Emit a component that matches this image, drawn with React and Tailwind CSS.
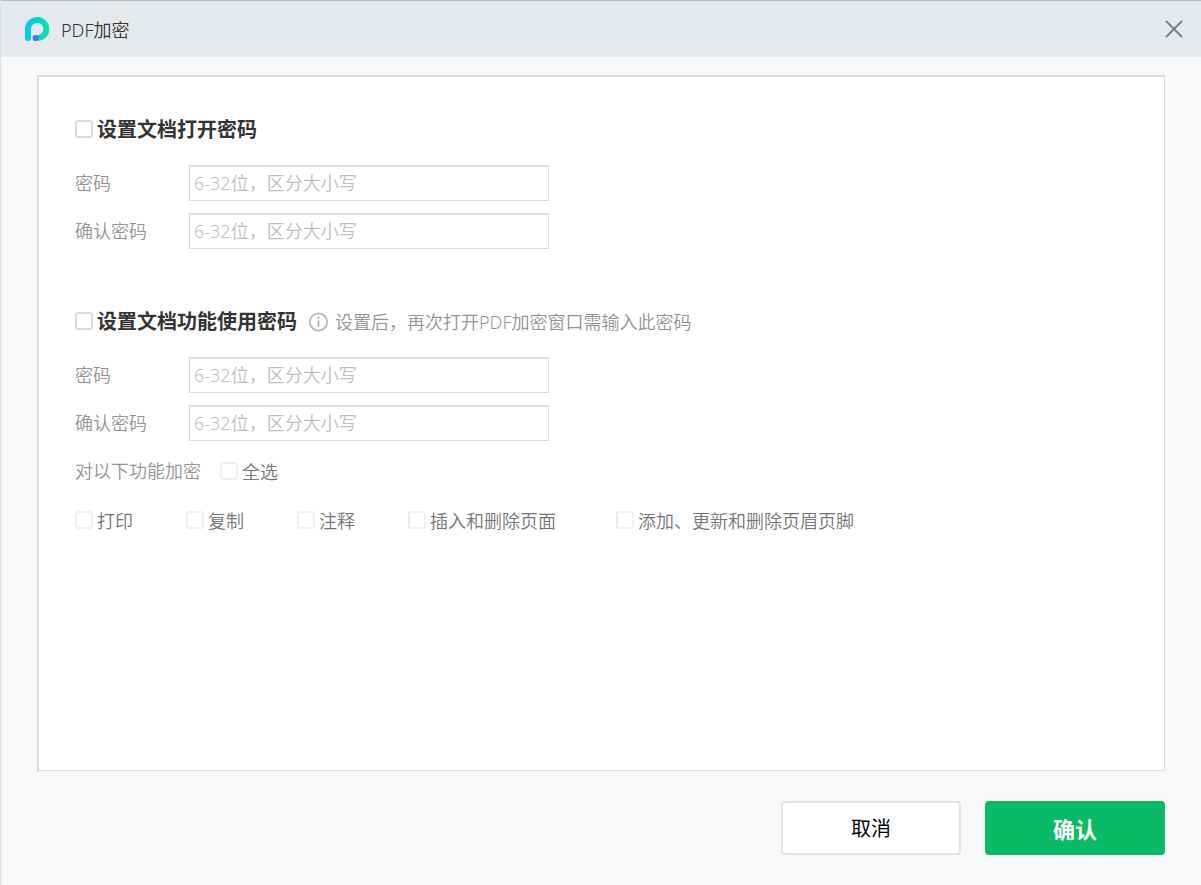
import React, { useState } from 'react';

const FEATURES = [
  { id: 'print', label: '打印' },
  { id: 'copy', label: '复制' },
  { id: 'annotate', label: '注释' },
  { id: 'pages', label: '插入和删除页面' },
  { id: 'headerFooter', label: '添加、更新和删除页眉页脚' },
];

const Logo = () => (
  <svg className="w-6 h-6" viewBox="0 0 24 24" fill="none" aria-hidden="true">
    <defs>
      <linearGradient id="logo-stroke" x1="0" y1="12" x2="24" y2="12" gradientUnits="userSpaceOnUse">
        <stop offset="0" stopColor="#06c8f5" />
        <stop offset="0.5" stopColor="#0ccfd2" />
        <stop offset="1" stopColor="#08e39c" />
      </linearGradient>
    </defs>
    <path
      d="M3 21V12A9 9 0 0 1 12 3A9 9 0 0 1 12.8 21"
      stroke="url(#logo-stroke)"
      strokeWidth="6"
      strokeLinejoin="round"
    />
    <circle cx="3" cy="21" r="3" fill="#06c8f5" />
    <circle cx="10.7" cy="21" r="3.1" fill="#3b74f7" />
  </svg>
);

const CloseIcon = () => (
  <svg className="w-5 h-5" viewBox="0 0 20 20" fill="none" stroke="#7b7d7f" strokeWidth="1.8" aria-hidden="true">
    <path d="M2 2L18 18M18 2L2 18" />
  </svg>
);

const InfoIcon = () => (
  <svg className="w-5 h-5 shrink-0" viewBox="0 0 20 20" fill="none" aria-hidden="true">
    <circle cx="9.5" cy="10" r="8.6" stroke="#b4b4b4" strokeWidth="1.8" />
    <circle cx="9.5" cy="5.8" r="1.1" fill="#a8a8a8" />
    <path d="M9.5 8.5V14.8" stroke="#a8a8a8" strokeWidth="1.6" />
  </svg>
);

const Checkbox = ({ id, checked, onChange, muted }) => (
  <input
    id={id}
    type="checkbox"
    checked={checked}
    onChange={onChange}
    className={`appearance-none shrink-0 w-[18px] h-[18px] rounded-[3px] bg-white checked:bg-[#0bba67] ${
      muted ? 'border-2 border-[#f0f0f0]' : 'border-2 border-[#dadada]'
    }`}
  />
);

const PasswordField = ({ id, label }) => (
  <div className="flex items-center">
    <label htmlFor={id} className="w-[114px] shrink-0 text-[#949494]">{label}</label>
    <input
      id={id}
      type="password"
      maxLength={32}
      placeholder="6-32位，区分大小写"
      className="w-[360px] h-9 px-1 pb-0.5 bg-white border border-t-2 border-[#dcdcdc] text-[#333] placeholder:text-[#bdbdbd] outline-none focus:border-[#0bba67]"
    />
  </div>
);

const App = () => {
  const [openEnabled, setOpenEnabled] = useState(false);
  const [usageEnabled, setUsageEnabled] = useState(false);
  const [selected, setSelected] = useState([]);

  const allSelected = selected.length === FEATURES.length;

  const toggleFeature = (id) => {
    setSelected(prev => (prev.includes(id) ? prev.filter(item => item !== id) : [...prev, id]));
  };

  return (
    <div className="min-h-screen flex flex-col bg-[#f7f8fa] border-l border-[#dfe0e2] font-['Noto_Sans','Noto_Sans_CJK_SC',sans-serif] text-lg leading-7 font-[350]">
      {/* Title bar */}
      <header className="h-[57px] shrink-0 flex items-center justify-between pl-6 pr-[17px] bg-[#e6e9ec] border-t border-[#bfc2c5]">
        <div className="flex items-center gap-3">
          <Logo />
          <h1 className="pt-0.5 text-[#333]">PDF加密</h1>
        </div>
        <button type="button" aria-label="关闭">
          <CloseIcon />
        </button>
      </header>

      <form className="flex-1 flex flex-col px-9 pt-[18px] pb-[30px]" onSubmit={e => e.preventDefault()}>
        <main className="flex-1 px-9 py-[38px] bg-white border border-t-2 border-l-2 border-[#dcdcdc]">
          {/* Open password */}
          <section>
            <div className="flex items-center gap-1 mb-[22px]">
              <Checkbox id="open" checked={openEnabled} onChange={() => setOpenEnabled(!openEnabled)} />
              <label htmlFor="open" className="pt-0.5 text-xl leading-[26px] font-bold text-[#333]">设置文档打开密码</label>
            </div>
            <div className="space-y-3">
              <PasswordField id="open-password" label="密码" />
              <PasswordField id="open-confirm" label="确认密码" />
            </div>
          </section>

          {/* Usage password */}
          <section className="mt-[58px]">
            <div className="flex items-center mb-[22px]">
              <div className="flex items-center gap-1">
                <Checkbox id="usage" checked={usageEnabled} onChange={() => setUsageEnabled(!usageEnabled)} />
                <label htmlFor="usage" className="pt-0.5 text-xl leading-[26px] font-bold text-[#333]">设置文档功能使用密码</label>
              </div>
              <p className="flex items-center gap-1.5 ml-3 pt-0.5 leading-[26px] text-[#949494]">
                <InfoIcon />
                设置后，再次打开PDF加密窗口需输入此密码
              </p>
            </div>
            <div className="space-y-3">
              <PasswordField id="usage-password" label="密码" />
              <PasswordField id="usage-confirm" label="确认密码" />
            </div>

            <div className="flex items-center gap-[19px] mt-4">
              <span className="text-[#949494]">对以下功能加密</span>
              <div className="flex items-center gap-1 text-[#757575]">
                <Checkbox
                  id="all"
                  muted
                  checked={allSelected}
                  onChange={() => setSelected(allSelected ? [] : FEATURES.map(f => f.id))}
                />
                <label htmlFor="all" className="pt-0.5 leading-[26px]">全选</label>
              </div>
            </div>

            <div className="grid grid-cols-[111px_111px_111px_208px_auto] mt-[21px] text-[#757575]">
              {FEATURES.map(feature => (
                <div key={feature.id} className="flex items-center gap-1">
                  <Checkbox
                    id={feature.id}
                    muted
                    checked={selected.includes(feature.id)}
                    onChange={() => toggleFeature(feature.id)}
                  />
                  <label htmlFor={feature.id} className="pt-0.5 leading-[26px]">{feature.label}</label>
                </div>
              ))}
            </div>
          </section>
        </main>

        {/* Actions */}
        <footer className="flex justify-end gap-6 mt-[30px]">
          <button type="button" className="w-[180px] h-[54px] pt-0.5 rounded-sm bg-white border-2 border-[#e4e4e4] text-xl font-normal text-black">
            取消
          </button>
          <button type="submit" className="w-[180px] h-[54px] pt-0.5 rounded-sm bg-[#0bba67] text-[22px] font-bold text-white">
            确认
          </button>
        </footer>
      </form>
    </div>
  );
};

export default App;
